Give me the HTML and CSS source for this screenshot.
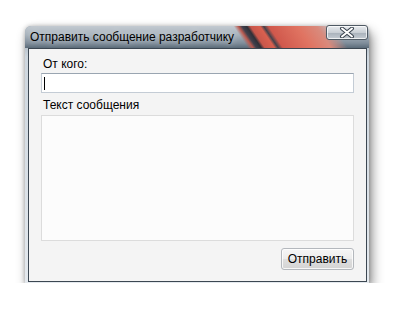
FILE: index.html
```html
<!DOCTYPE html>
<html lang="ru">
<head>
    <meta charset="UTF-8">
    <title>Отправить сообщение разработчику</title>
    <link rel="stylesheet" href="styles.css">
</head>
<body>

<div class="window">
    <div class="titlebar">
        <span class="title">Отправить сообщение разработчику</span>
        <div class="close-btn">
            <svg width="16" height="11" viewBox="0 0 16 11">
                <path d="M3 1.5 L13 9.5 M13 1.5 L3 9.5" stroke="#3b4550" stroke-width="4" stroke-linecap="round"/>
                <path d="M3 1.5 L13 9.5 M13 1.5 L3 9.5" stroke="#ffffff" stroke-width="2" stroke-linecap="round"/>
            </svg>
        </div>
    </div>

    <div class="client">
        <div class="label">От кого:</div>
        <div class="textbox"><span class="caret"></span></div>
        <div class="label">Текст сообщения</div>
        <div class="memo"></div>
        <div class="actions">
            <button class="send-btn">Отправить</button>
        </div>
    </div>
</div>

</body>
</html>
```

FILE: styles.css
```css
body {
    margin: 0;
    background: #ffffff;
    font-family: "Liberation Sans", Arial, sans-serif;
    font-size: 12px;
    color: #000000;
}

.window {
    margin: 26px 0 0 25px;
    width: 344px;
    height: 257px;
    display: flex;
    flex-direction: column;
    border-radius: 6px 6px 0 0;
    background: linear-gradient(to bottom, #8e9ba7, #cdd6de 12%, #e4e9ee);
    box-shadow: 3px 6px 12px rgba(0, 0, 0, 0.45), 0 0 4px rgba(0, 0, 0, 0.25);
}

.titlebar {
    height: 22px;
    display: flex;
    align-items: flex-start;
    border-radius: 6px 6px 0 0;
    background:
        linear-gradient(56deg, transparent 185px, #b95a50 189px, #40404c 192px, #2f3038 196px, #c8574b 199px, #d9604f 207px, #43424b 210px, #d0584c 214px, #e07462 238px, #d98a7c 254px, transparent 268px),
        linear-gradient(to bottom, #c3cad1 0%, #a7b2bc 40%, #7f8d9a 78%, #5b6b79 100%);
}

.title {
    flex: 1;
    padding: 3px 0 0 5px;
    font-size: 12px;
    line-height: 16px;
    color: #000000;
    text-shadow: 0 0 6px rgba(255, 255, 255, 0.7);
    white-space: nowrap;
}

.close-btn {
    width: 40px;
    height: 13px;
    margin: -1px 1px 0 0;
    display: flex;
    align-items: center;
    justify-content: center;
    border: 1px solid #4f5a64;
    border-radius: 3px;
    box-shadow: inset 0 0 0 1px rgba(255, 255, 255, 0.7);
    background: linear-gradient(to bottom, #e9ecef, #c9cfd5 50%, #aab3bc 55%, #c4cbd2);
}

.client {
    flex: 1;
    margin: 0 2px 1px 3px;
    padding: 7px 12px 0 12px;
    display: flex;
    flex-direction: column;
    border: 1px solid #3c4752;
    background: #f4f4f4;
}

.label {
    padding-left: 2px;
    line-height: 17px;
}

.textbox {
    height: 18px;
    margin-bottom: 4px;
    display: flex;
    align-items: center;
    border: 1px solid #c4ccd5;
    border-top-color: #9aa5b1;
    background: #ffffff;
}

.caret {
    width: 1px;
    height: 13px;
    margin-left: 2px;
    background: #000000;
}

.memo {
    height: 124px;
    margin-top: 1px;
    border: 1px solid #dcdcdc;
    background: #fcfcfc;
}

.actions {
    display: flex;
    justify-content: flex-end;
    padding-top: 7px;
}

.send-btn {
    width: 73px;
    height: 22px;
    padding: 0;
    font-family: "Liberation Sans", Arial, sans-serif;
    font-size: 12px;
    color: #000000;
    border: 1px solid #b4b8bd;
    border-radius: 3px;
    background: linear-gradient(to bottom, #f6f6f6, #ececec 50%, #dedede 52%, #d4d4d4);
    box-shadow: inset 0 0 0 1px rgba(255, 255, 255, 0.8);
}
```
